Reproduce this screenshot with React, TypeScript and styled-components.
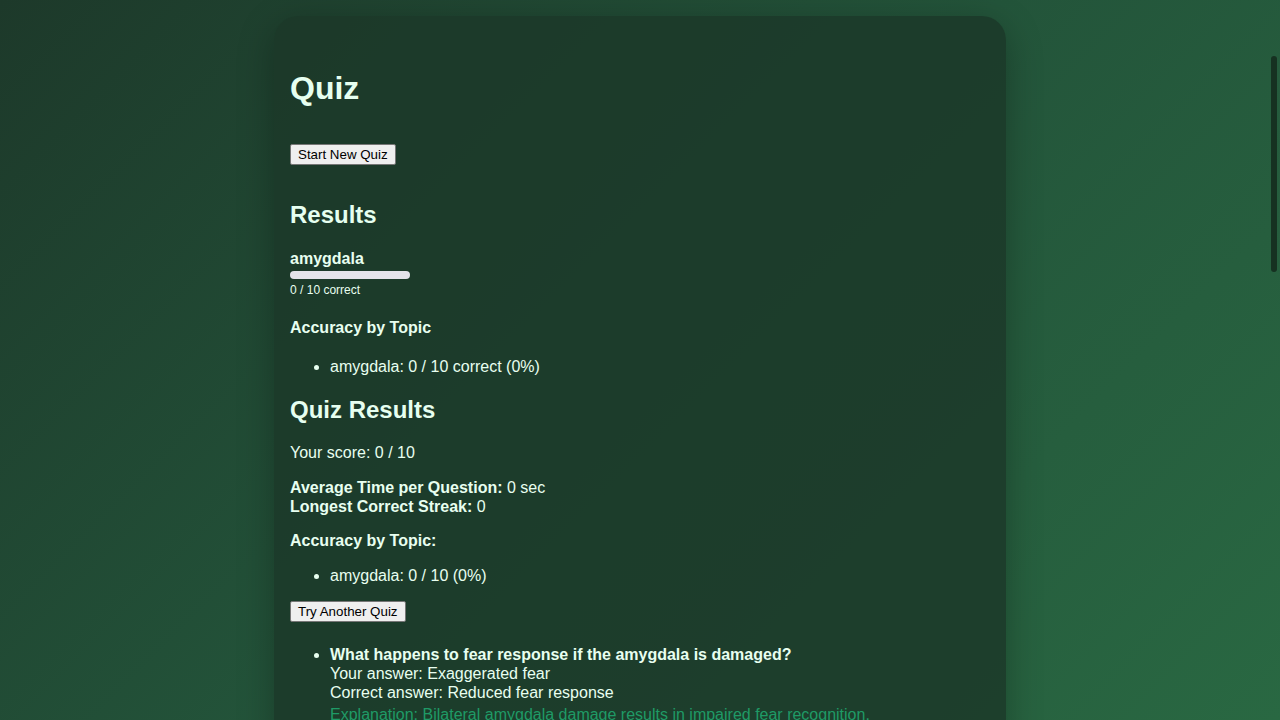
import React from "react";
import styled, { createGlobalStyle } from "styled-components";

const GlobalStyle = createGlobalStyle`
  html, body {
    margin: 0;
    padding: 0;
  }
  body {
    font-family: "Liberation Sans", Arial, Helvetica, sans-serif;
    font-size: 16px;
    line-height: 1.19;
    color: #e8fff0;
    background: linear-gradient(135deg, #1d392a 0%, #23543a 50%, #296842 100%) fixed;
    min-height: 100vh;
  }
`;

const ScrollThumb = styled.div`
  position: fixed;
  top: 56px;
  right: 3px;
  width: 6px;
  height: 216px;
  border-radius: 3px;
  background: #163121;
  z-index: 10;
`;

const Page = styled.div`
  padding: 16px 0 40px;
`;

const Card = styled.main`
  max-width: 700px;
  margin: 0 auto;
  padding: 33px 16px 32px;
  border-radius: 24px;
  background: rgba(28, 56, 41, 0.84);
  box-shadow: 0 10px 36px rgba(0, 0, 0, 0.28);
`;

const Title = styled.h1`
  font-size: 32px;
  line-height: 1.15;
  font-weight: bold;
  margin: 21.44px 0;
  color: #e6fff0;
`;

const Controls = styled.div`
  margin: 37px 0 36px;
`;

const ActionButton = styled.button`
  font-family: "Liberation Sans", Arial, sans-serif;
  font-size: 13.33px;
  line-height: 15px;
  padding: 2px 7px;
  color: #000;
  background: #efefef;
  border: 1px solid #767676;
  border-radius: 2px;
  cursor: pointer;
`;

const SectionTitle = styled.h2`
  font-size: 24px;
  line-height: 1.15;
  font-weight: bold;
  margin: 19.92px 0;
  color: #e6fff0;
`;

const TopicBlock = styled.div``;

const TopicName = styled.strong`
  display: block;
  font-size: 16px;
`;

const Track = styled.div`
  width: 120px;
  height: 8px;
  margin: 3px 0 4px;
  border-radius: 4px;
  background: #e4e4ea;
  overflow: hidden;
`;

const Fill = styled.div`
  height: 100%;
  background: #2fb873;
`;

const SmallText = styled.div`
  font-size: 12px;
`;

const SubTitle = styled.h4`
  font-size: 16px;
  font-weight: bold;
  margin: 21.28px 0 19.5px;
`;

const List = styled.ul`
  margin: 16px 0;
  padding-left: 40px;
`;

const Para = styled.p<{ $bold?: boolean }>`
  margin: 15.5px 0;
  font-weight: ${(p) => (p.$bold ? "bold" : "normal")};
`;

const ReviewList = styled.ul`
  margin: 23px 0 16px;
  padding-left: 40px;
`;

const ReviewItem = styled.li`
  margin-bottom: 14px;
`;

const Explanation = styled.div`
  margin-top: 2px;
  color: #1f9a66;
`;

type Review = { q: string; yours: string; correct: string; why: string };

const reviews: Review[] = [
  {
    q: "What happens to fear response if the amygdala is damaged?",
    yours: "Exaggerated fear",
    correct: "Reduced fear response",
    why: "Bilateral amygdala damage results in impaired fear recognition.",
  },
  {
    q: "Which brain lobe contains the amygdala?",
    yours: "Frontal lobe",
    correct: "Temporal lobe",
    why: "The amygdala lies deep within the medial temporal lobe.",
  },
  {
    q: "What emotion is most associated with the amygdala?",
    yours: "Happiness",
    correct: "Fear",
    why: "The amygdala is central to detecting threats and processing fear.",
  },
  {
    q: "Which structure sits directly next to the amygdala?",
    yours: "Cerebellum",
    correct: "Hippocampus",
    why: "The hippocampus lies just behind the amygdala in the temporal lobe.",
  },
  {
    q: "What type of memory does the amygdala strengthen?",
    yours: "Procedural memory",
    correct: "Emotional memory",
    why: "Emotional arousal enhances memory consolidation via the amygdala.",
  },
  {
    q: "Which system is the amygdala a part of?",
    yours: "Basal ganglia",
    correct: "Limbic system",
    why: "The amygdala is a core component of the limbic system.",
  },
  {
    q: "What shape gives the amygdala its name?",
    yours: "Seahorse",
    correct: "Almond",
    why: "Amygdala comes from the Greek word for almond.",
  },
  {
    q: "Which hormone release does the amygdala help trigger?",
    yours: "Insulin",
    correct: "Cortisol",
    why: "Amygdala signals activate the HPA axis, releasing cortisol.",
  },
  {
    q: "What condition is linked to an overactive amygdala?",
    yours: "Amnesia",
    correct: "Anxiety disorders",
    why: "Heightened amygdala activity is observed in anxiety and PTSD.",
  },
  {
    q: "How many amygdalae does a typical human brain have?",
    yours: "One",
    correct: "Two",
    why: "There is one amygdala in each cerebral hemisphere.",
  },
];

export default function App() {
  const correct = 0;
  const total = 10;
  const pct = Math.round((correct / total) * 100);
  return (
    <>
      <GlobalStyle />
      <ScrollThumb aria-hidden="true" />
      <Page>
        <Card>
          <Title>Quiz</Title>
          <Controls>
            <ActionButton type="button">Start New Quiz</ActionButton>
          </Controls>

          <SectionTitle>Results</SectionTitle>
          <TopicBlock>
            <TopicName>amygdala</TopicName>
            <Track>
              <Fill style={{ width: `${pct}%` }} />
            </Track>
            <SmallText>
              {correct} / {total} correct
            </SmallText>
          </TopicBlock>
          <SubTitle>Accuracy by Topic</SubTitle>
          <List>
            <li>
              amygdala: {correct} / {total} correct ({pct}%)
            </li>
          </List>

          <SectionTitle>Quiz Results</SectionTitle>
          <Para>
            Your score: {correct} / {total}
          </Para>
          <Para>
            <strong>Average Time per Question:</strong> 0 sec
            <br />
            <strong>Longest Correct Streak:</strong> 0
          </Para>
          <Para $bold>Accuracy by Topic:</Para>
          <List>
            <li>
              amygdala: {correct} / {total} ({pct}%)
            </li>
          </List>
          <div>
            <ActionButton type="button">Try Another Quiz</ActionButton>
          </div>
          <ReviewList>
            {reviews.map((r) => (
              <ReviewItem key={r.q}>
                <strong>{r.q}</strong>
                <br />
                Your answer: {r.yours}
                <br />
                Correct answer: {r.correct}
                <Explanation>Explanation: {r.why}</Explanation>
              </ReviewItem>
            ))}
          </ReviewList>
        </Card>
      </Page>
    </>
  );
}
